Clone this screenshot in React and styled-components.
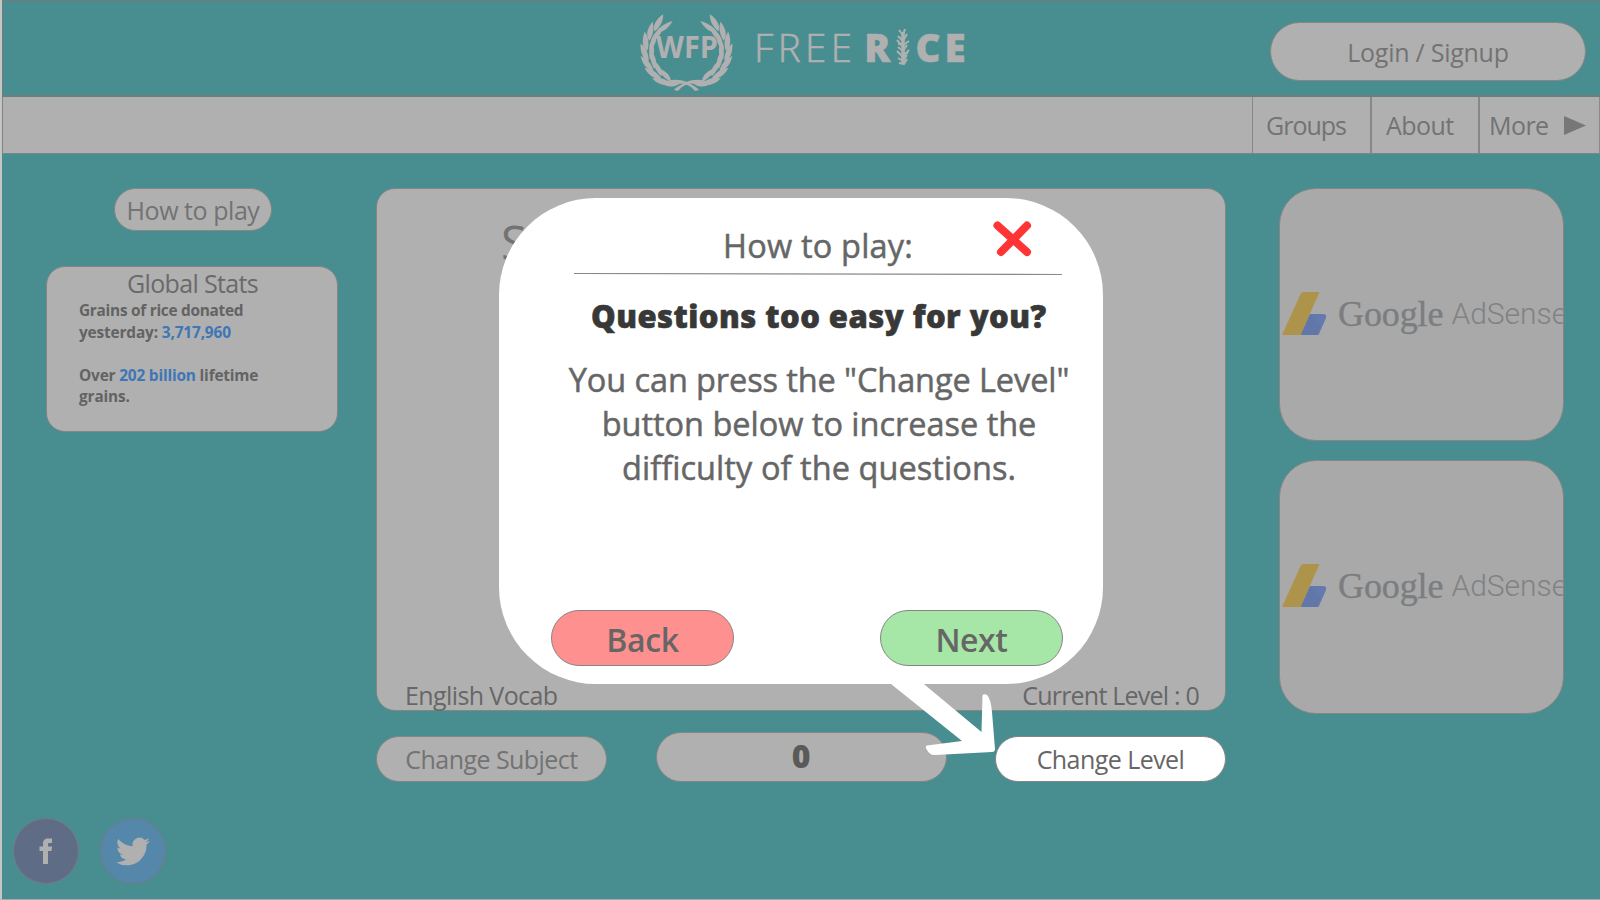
import React from 'react';
import styled, { createGlobalStyle } from 'styled-components';

const Global = createGlobalStyle`
  * { box-sizing: border-box; }
  html, body { margin: 0; padding: 0; background: #c9cccc; overflow: hidden; }
  button { font: inherit; color: inherit; padding: 0; }
`;

const ink = '#737373';
const panel = '#b0b0b0';
const rim = '#858585';

const Page = styled.div`
  position: relative;
  width: 1600px;
  height: 900px;
  border-left: 2px solid #c4c6c6;
  border-bottom: 1px solid #a3a9aa;
  background: #488e90;
  font-family: 'Open Sans', 'Noto Sans', sans-serif;
  font-size: 25px;
  color: ${ink};
  overflow: hidden;
  display: flex;
  flex-direction: column;
`;

const Header = styled.header`
  height: 97px;
  flex: none;
  border-top: 1px solid #777;
  border-bottom: 2px solid #6f7f80;
  border-left: 1px solid #6f7f80;
  display: flex;
  align-items: flex-start;
  justify-content: space-between;
  padding: 0 14px 0 637px;
`;

const Brand = styled.div`
  display: flex;
  align-items: flex-start;
  padding-top: 11px;
`;

const Text = styled.span`
  display: block;
  white-space: nowrap;
  line-height: ${(p) => p.$lh || 34}px;
  font-size: ${(p) => p.$size || 25}px;
  font-weight: ${(p) => p.$weight || 400};
  letter-spacing: ${(p) => (p.$track === undefined ? -0.55 : p.$track)}px;
  -webkit-text-stroke: ${(p) => p.$stroke || 0}px currentColor;
`;

const WordMark = styled.div`
  display: flex;
  align-items: flex-start;
  margin-left: 20px;
  padding-top: 9px;
  color: ${panel};
`;

const BoldMark = styled.div`
  display: flex;
  align-items: flex-start;
  margin-left: 8px;
`;

const RiceSlot = styled.span`
  display: block;
  margin: 8px 5px 0 6px;
  width: 14px;
`;

const Pill = styled.button`
  width: ${(p) => p.$w}px;
  height: ${(p) => p.$h}px;
  flex: none;
  border: 1px solid ${rim};
  border-radius: ${(p) => p.$h / 2}px;
  background: ${(p) => p.$bg || panel};
  color: ${(p) => p.$color || ink};
  display: flex;
  justify-content: center;
  align-items: flex-start;
  padding-top: ${(p) => p.$top || 0}px;
`;

const LoginPill = styled(Pill)`
  margin-top: 21px;
`;

const Nav = styled.nav`
  height: 57px;
  flex: none;
  display: flex;
  justify-content: flex-end;
  background: ${panel};
  border-bottom: 1px solid #7f8585;
  border-left: 1px solid #7f8585;
  border-right: 1px solid #8a8a8a;
`;

const NavItem = styled.a`
  width: ${(p) => p.$w}px;
  border-left: ${(p) => p.$line || 2}px solid #888;
  padding: 11px 0 0 ${(p) => p.$pad}px;
  display: flex;
`;

const Triangle = styled.svg`
  margin: 8px 0 0 15px;
`;

const Body = styled.main`
  flex: 1;
  display: flex;
  padding-top: 34px;
`;

const Side = styled.aside`
  width: 374px;
  display: flex;
  flex-direction: column;
`;

const SideTop = styled.div`
  padding-left: 112px;
  height: 78px;
`;

const Stats = styled.section`
  margin-left: 44px;
  width: 292px;
  height: 166px;
  border: 1px solid ${rim};
  border-radius: 19px;
  background: ${panel};
  padding: 0 0 0 32px;
`;

const StatsTitle = styled.h2`
  margin: 0 0 1px 48px;
  font: inherit;
  color: #6a6a6a;
`;

const StatsLine = styled.p`
  margin: ${(p) => p.$gap || 0}px 0 0;
  font-size: 15.4px;
  font-weight: 700;
  line-height: 21.5px;
  letter-spacing: ${(p) => p.$track || 0}px;
  white-space: nowrap;
  color: #636363;
`;

const Figure = styled.span`
  color: #3e76b6;
`;

const Social = styled.div`
  display: flex;
  gap: 21px;
  margin: auto 0 15px 11px;
`;

const Disc = styled.a`
  width: 66px;
  height: 66px;
  border-radius: 50%;
  border: 1px solid #76798a;
  background: ${(p) => p.$bg};
  display: flex;
  align-items: center;
  justify-content: center;
`;

const Center = styled.div`
  width: 850px;
`;

const Quiz = styled.section`
  height: 523px;
  border: 1px solid ${rim};
  border-radius: 19px;
  background: ${panel};
  color: #676767;
  display: flex;
  flex-direction: column;
  justify-content: space-between;
  padding: 21px 26px 0 28px;
`;

const Subject = styled.h1`
  margin: 0 0 0 96px;
  width: 200px;
  height: 64px;
  font-weight: 400;
  font-size: 47px;
  line-height: 64px;
  border-bottom: 1px solid #888;
  color: ${ink};
`;

const QuizFoot = styled.div`
  display: flex;
  justify-content: space-between;
  height: 34px;
  margin-bottom: -2px;
`;

const Actions = styled.div`
  display: flex;
  justify-content: space-between;
  align-items: flex-end;
  margin-top: 21px;
  height: 50px;
`;

const Ads = styled.aside`
  margin-left: 53px;
  display: flex;
  flex-direction: column;
  gap: 19px;
`;

const Ad = styled.div`
  width: 285px;
  height: ${(p) => p.$h}px;
  border: 1px solid ${rim};
  border-radius: 37px;
  background: #a9a9a9;
  overflow: hidden;
  display: flex;
  align-items: flex-start;
  padding: 103px 0 0 2px;

  > * { flex: none; }
`;

const AdGoogle = styled.span`
  font-family: 'Liberation Serif', serif;
  font-size: 36px;
  line-height: 42px;
  margin: 1px 0 0 10px;
  letter-spacing: -0.1px;
  color: #7b7e80;
  -webkit-text-stroke: 0.4px #7b7e80;
`;

const AdSense = styled.span`
  font-family: Roboto, sans-serif;
  font-weight: 300;
  font-size: 30px;
  line-height: 36px;
  margin: 4px 0 0 8px;
  white-space: nowrap;
  color: #808284;
`;

const Modal = styled.div`
  position: absolute;
  left: 497px;
  top: 198px;
  width: 604px;
  height: 486px;
  border-radius: 97px;
  background: #fff;
  color: #666;
  padding: 24px 40px 0 52px;
  display: flex;
  flex-direction: column;
`;

const ModalHead = styled.div`
  display: flex;
  align-items: flex-start;
  height: 51px;
  padding-left: 172px;
  justify-content: space-between;
`;

const CloseIcon = styled.svg`
  margin: -1px 31px 0 0;
`;

const Rule = styled.svg`
  display: block;
  margin-left: 23px;
`;

const Tip = styled.h3`
  margin: 18px 0 0 40px;
  font-size: 31px;
  line-height: 44px;
  font-weight: 800;
  letter-spacing: 0.46px;
  color: #383838;
  -webkit-text-stroke: 0.6px #383838;
  white-space: nowrap;
`;

const Copy = styled.div`
  margin-top: 20px;
  margin-left: 28px;
  width: 480px;
  height: 173px;
  display: flex;
  flex-direction: column;
  align-items: center;
`;

const ModalActions = styled.div`
  display: flex;
  justify-content: space-between;
  margin-top: auto;
  padding-bottom: 18px;
`;

const Arrow = styled.svg`
  position: absolute;
  left: 878px;
  top: 680px;
`;

/* Laurel branch: leaf pairs placed along an arc */
const leaves = [];
for (let i = 0; i < 7; i++) {
  const turn = 124 + i * 17;
  const a = (turn * Math.PI) / 180;
  leaves.push({
    x: 46.5 + 38.5 * Math.cos(a),
    y: 39 + 34 * Math.sin(a),
    deg: turn + 90,
  });
}

const Branch = () => (
  <g>
    {leaves.map((l, i) => (
      <g key={i} transform={`translate(${l.x} ${l.y}) rotate(${l.deg})`}>
        <path d="M-7 0C-5 -6 3 -8 11 -6.500C7 -2 1 0.500 -7 0Z" />
        <path d="M-6 1.500C-1 0 7 1.500 13 5C5 7.500 -3 6.500 -6 1.500Z" />
      </g>
    ))}
  </g>
);

const LaurelLogo = () => (
  <svg width="94" height="82" viewBox="0 0 94 82" fill={panel}>
    <Branch />
    <g transform="translate(93 0) scale(-1 1)">
      <Branch />
    </g>
    <path d="M21 71C30 67 39 67 47 70C53 73 59 77 59 78L55 79C50 73 44 71 39 72C33 76 26 75 21 71Z" />
    <path d="M72 71C63 67 54 67 46 70C40 73 34 77 34 78L38 79C43 73 49 71 54 72C60 76 67 75 72 71Z" />
    <text x="16" y="46" fontFamily="Open Sans" fontWeight="700" fontSize="31" textLength="62" lengthAdjust="spacingAndGlyphs">WFP</text>
  </svg>
);

const RiceEar = () => (
  <svg width="14" height="36" viewBox="0 0 14 36" fill="none" stroke={panel} strokeWidth="2">
    <path strokeWidth="3.500" d="M7 3V34" />
    <path d="M3 1L7 6L9 0M2 7L7 12L11 5M1 11L6 17L13 12M2 18L7 22L11 16M1 22L7 28L13 21M2 29L7 32L11 26M3 34L8 35L11 30M2 15H8M6 24H12" />
  </svg>
);

const AdMark = () => (
  <svg width="46" height="45" viewBox="0 0 46 45">
    <path d="M18.500 43L28 22H41Q45 22 44 26L36.500 43Z" fill="#637aae" />
    <path d="M19 43L28 22L38 34L34 43Z" fill="#5f75a4" opacity=".6" />
    <path d="M0 43L19 1Q20 0 21 0H37.500L18.500 43Z" fill="#ae944b" />
  </svg>
);

const AdCard = ({ h }) => (
  <Ad $h={h}>
    <AdMark />
    <AdGoogle>Google</AdGoogle>
    <AdSense>AdSense</AdSense>
  </Ad>
);

export default function App() {
  return (
    <Page>
      <Global />
      <Header>
        <Brand>
          <LaurelLogo />
          <WordMark>
            <Text $size={38.5} $weight={300} $lh={52} $track={4.4} $stroke={0.6}>FREE</Text>
            <BoldMark>
              <Text $size={38.5} $weight={800} $lh={52} $track={0} $stroke={0.5}>R</Text>
              <RiceSlot><RiceEar /></RiceSlot>
              <Text $size={38.5} $weight={800} $lh={52} $track={4} $stroke={0.5}>CE</Text>
            </BoldMark>
          </WordMark>
        </Brand>
        <LoginPill $w={316} $h={59} $top={12}>
          <Text $track={-0.25}>Login / Signup</Text>
        </LoginPill>
      </Header>
      <Nav>
        <NavItem $w={118} $pad={13} $line={1}><Text $track={-1}>Groups</Text></NavItem>
        <NavItem $w={108} $pad={14}><Text>About</Text></NavItem>
        <NavItem $w={121} $pad={9}>
          <Text>More</Text>
          <Triangle width="22" height="20"><path d="M0 0L22 9.500L0 19Z" fill="#777" /></Triangle>
        </NavItem>
      </Nav>
      <Body>
        <Side>
          <SideTop>
            <Pill $w={158} $h={43} $top={4}><Text $track={-0.45}>How to play</Text></Pill>
          </SideTop>
          <Stats>
            <StatsTitle><Text $lh={32} $track={-0.65}>Global Stats</Text></StatsTitle>
            <StatsLine $track={-0.27}>Grains of rice donated</StatsLine>
            <StatsLine $track={-0.15}>yesterday: <Figure>3,717,960</Figure></StatsLine>
            <StatsLine $gap={21.5} $track={-0.18}>Over <Figure>202 billion</Figure> lifetime</StatsLine>
            <StatsLine $track={-0.15}>grains.</StatsLine>
          </Stats>
          <Social>
            <Disc $bg="#5f6c86">
              <svg width="14" height="26" viewBox="0 0 14 26" fill={panel}>
                <path d="M4 26V13H0.500V8.500H4V6C4 2 6 0.500 9 0.500H13V5H10.500C9.500 5 9 5.500 9 6.500V8.500H13L12.500 13H9V26Z" />
              </svg>
            </Disc>
            <Disc $bg="#5487aa">
              <svg width="34" height="35" viewBox="0 0 24 24" fill={panel}>
                <path d="M23.950 4.570a10 10 0 0 1-2.820.770 4.960 4.960 0 0 0 2.160-2.720c-.950.550-2 .950-3.130 1.180a4.920 4.920 0 0 0-8.380 4.480C7.690 8.100 4.070 6.130 1.640 3.160a4.820 4.820 0 0 0-.670 2.480c0 1.710.870 3.210 2.190 4.100a4.900 4.900 0 0 1-2.230-.620v.060a4.920 4.920 0 0 0 3.950 4.830 5 5 0 0 1-2.210.080 4.940 4.940 0 0 0 4.600 3.420A9.870 9.870 0 0 1 0 19.540a14 14 0 0 0 7.550 2.210c9.050 0 14-7.500 14-13.980 0-.210 0-.420-.020-.630a9.900 9.900 0 0 0 2.460-2.550z" />
              </svg>
            </Disc>
          </Social>
        </Side>
        <Center>
          <Quiz>
            <Subject>Subject</Subject>
            <QuizFoot>
              <Text $track={-0.6}>English Vocab</Text>
              <Text $track={-0.78}>Current Level : 0</Text>
            </QuizFoot>
          </Quiz>
          <Actions>
            <Pill $w={231} $h={46} $top={5}><Text>Change Subject</Text></Pill>
            <Pill $w={291} $h={50} $color="#5a5a5a"><Text $size={32} $weight={800} $lh={46} $track={0}>0</Text></Pill>
            <Pill $w={231} $h={46} $top={5} $bg="#fff" $color="#666"><Text>Change Level</Text></Pill>
          </Actions>
        </Center>
        <Ads>
          <AdCard h={253} />
          <AdCard h={254} />
        </Ads>
      </Body>
      <Modal>
        <ModalHead>
          <Text $size={32.5} $lh={48} $track={0.2} $stroke={0.5}>How to play:</Text>
          <CloseIcon width="39" height="36" viewBox="0 0 39 36" stroke="#ff3535" strokeWidth="8" strokeLinecap="round">
            <path d="M4.500 4.500L34 31M34 4.500L8 31" />
          </CloseIcon>
        </ModalHead>
        <Rule width="488" height="3"><path d="M0 .5L488 1.500" stroke="#8a8a8a" strokeWidth="1.200" /></Rule>
        <Tip>Questions too easy for you?</Tip>
        <Copy>
          <Text $size={32.5} $lh={44} $track={-0.1} $stroke={0.5}>You can press the "Change Level"</Text>
          <Text $size={32.5} $lh={44} $track={-0.02} $stroke={0.5}>button below to increase the</Text>
          <Text $size={32.5} $lh={44} $track={0.07} $stroke={0.5}>difficulty of the questions.</Text>
        </Copy>
        <ModalActions>
          <Pill $w={183} $h={56} $top={5} $bg="#ff9090" $color="#666"><Text $size={32} $weight={600} $lh={48} $track={-0.4}>Back</Text></Pill>
          <Pill $w={183} $h={56} $top={5} $bg="#a6e6a6" $color="#666"><Text $size={32} $weight={600} $lh={48} $track={-0.4}>Next</Text></Pill>
        </ModalActions>
      </Modal>
      <Arrow width="120" height="80" viewBox="880 680 120 80" fill="#fff">
        <path d="M886 680L919 680L981.500 732L982.500 695.500Q984 693 987.500 695.500Q991 700 992 712L995 749Q995 752 992 752L935 755Q930 755.500 927 750Q924.500 746 927 745.500L962 741Z" />
      </Arrow>
    </Page>
  );
}
